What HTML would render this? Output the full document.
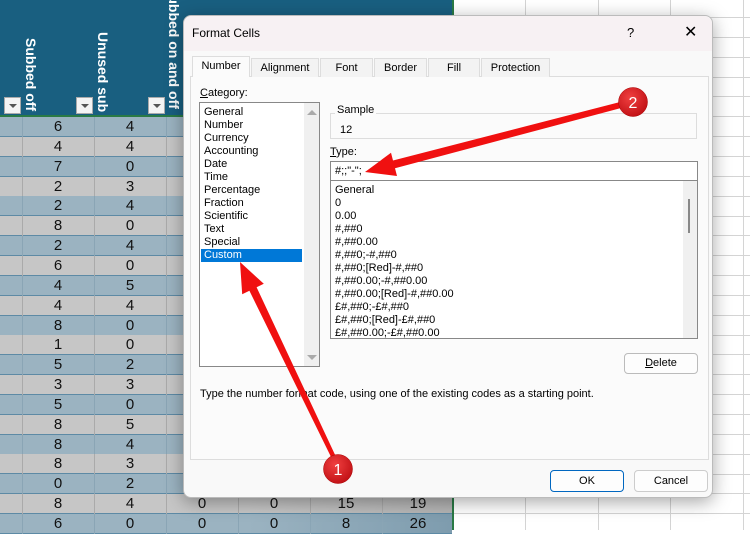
<!DOCTYPE html>
<html><head><style>
*{margin:0;padding:0;box-sizing:border-box}
body{width:750px;height:530px;overflow:hidden;position:relative;background:#fff;font-family:"Liberation Sans",sans-serif}
.abs{position:absolute}
.hdr{left:0;top:0;width:452px;height:115px;background:#195f80}
.vt{position:absolute;color:#fff;font-weight:bold;font-size:14px;writing-mode:vertical-rl;white-space:nowrap}
.fb{position:absolute;top:97px;width:17px;height:17px;background:#f4f4f4;border:1px solid #aaa}
.fb:after{content:"";position:absolute;left:4px;top:6px;border-left:4px solid transparent;border-right:4px solid transparent;border-top:4px solid #555}
.row{position:absolute;left:0;width:452px;height:20px;border-bottom:1px solid #5d8aa5;font-size:15px;color:#111}
.row span{position:absolute;width:72px;text-align:center;top:1px}
.gl{position:absolute;background:#d4d4d4}
.dlg{left:183px;top:15px;width:530px;height:483px;background:#f9f9f9;border:1px solid #bbb;border-radius:8px;box-shadow:0 4px 18px rgba(0,0,0,.35);font-size:11px;color:#000}
.tab{position:absolute;top:42px;height:19px;border:1px solid #ddd;border-bottom:none;background:#f3f3f3;text-align:center;line-height:18px;font-size:11px}
.li{position:absolute;left:4px;font-size:11px;line-height:13px}
</style></head><body>
<div class="abs hdr"></div>
<div class="abs" style="left:0;top:115px;width:452px;height:2px;background:#2a7a45"></div>
<div class="vt" style="left:23px;top:38px">Subbed off</div>
<div class="vt" style="left:95px;top:32px">Unused sub</div>
<div class="vt" style="left:166px;top:-14px">Subbed on and off</div>
<div class="fb" style="left:4px"></div><div class="fb" style="left:76px"></div><div class="fb" style="left:148px"></div>
<!-- right grid -->
<div id="grid"></div>
<div class="abs" style="left:452px;top:0;width:2px;height:530px;background:#2a7a45"></div>
<div id="rows"></div>
<script>
var v=[[6,4],[4,4],[7,0],[2,3],[2,4],[8,0],[2,4],[6,0],[4,5],[4,4],[8,0],[1,0],[5,2],[3,3],[5,0],[8,5],[8,4],[8,3],[0,2],[8,4,0,0,15,19],[6,0,0,0,8,26]];
var h="";
for(var i=0;i<v.length;i++){var t=117+i*19.85;var bg=i%2?"#c6c6c6":"#9bb3c1";
h+='<div class="row" style="top:'+t+'px;background:linear-gradient(90deg,'+bg+' 0,'+bg+' 55%,'+(i%2?"#b4b4b4":"#7e9cae")+' 100%)">';
for(var j=0;j<6;j++){h+='<div style="position:absolute;left:'+(22+j*72)+'px;top:0;width:1px;height:20px;background:'+(i%2?'#aaa':'#8aa5b5')+'"></div>';}
for(var j=0;j<v[i].length;j++){h+='<span style="left:'+(22+j*72)+'px">'+v[i][j]+'</span>';}
h+='</div>';}
document.getElementById("rows").innerHTML=h;
var g="";
for(var x=525;x<750;x+=72.5)g+='<div class="gl" style="left:'+x+'px;top:0;width:1px;height:530px"></div>';
for(var y=17;y<530;y+=19.85)g+='<div class="gl" style="left:454px;top:'+y+'px;width:296px;height:1px"></div>';
document.getElementById("grid").innerHTML=g;
</script>
<div class="abs dlg">
 <div class="abs" style="left:0;top:0;width:528px;height:35px;background:#f7f1f3;border-radius:8px 8px 0 0"></div>
 <div class="abs" style="left:8px;top:10px;font-size:12px">Format Cells</div>
 <div class="abs" style="left:443px;top:9px;font-size:13px">?</div>
 <div class="abs" style="left:500px;top:6px;font-size:16px">✕</div>
 <div class="abs" style="left:6px;top:60px;width:519px;height:384px;background:#fbfbfb;border:1px solid #ddd"></div>
 <div class="tab" style="left:8px;width:58px;background:#fbfbfb;top:40px;height:21px">Number</div>
 <div class="tab" style="left:67px;width:68px">Alignment</div>
 <div class="tab" style="left:136px;width:53px">Font</div>
 <div class="tab" style="left:190px;width:53px">Border</div>
 <div class="tab" style="left:244px;width:52px">Fill</div>
 <div class="tab" style="left:297px;width:69px">Protection</div>
 <div class="abs" style="left:16px;top:71px"><u>C</u>ategory:</div>
 <div class="abs" style="left:15px;top:86px;width:121px;height:265px;background:#fff;border:1px solid #888">
  <div class="li" style="top:3px">General</div><div class="li" style="top:16px">Number</div><div class="li" style="top:29px">Currency</div><div class="li" style="top:42px">Accounting</div><div class="li" style="top:55px">Date</div><div class="li" style="top:68px">Time</div><div class="li" style="top:81px">Percentage</div><div class="li" style="top:94px">Fraction</div><div class="li" style="top:107px">Scientific</div><div class="li" style="top:120px">Text</div><div class="li" style="top:133px">Special</div>
  <div class="li" style="top:146px;left:1px;width:101px;background:#0078d7;color:#fff;padding-left:3px">Custom</div>
  <div class="abs" style="left:104px;top:0;width:15px;height:263px;background:#f0f0f0"></div>
  <div class="abs" style="left:107px;top:7px;border-left:5px solid transparent;border-right:5px solid transparent;border-bottom:5px solid #aaa"></div>
  <div class="abs" style="left:107px;top:252px;border-left:5px solid transparent;border-right:5px solid transparent;border-top:5px solid #aaa"></div>
 </div>
 <div class="abs" style="left:146px;top:97px;width:367px;height:26px;border:1px solid #ddd"></div>
 <div class="abs" style="left:151px;top:88px;background:#fbfbfb;padding:0 2px">Sample</div>
 <div class="abs" style="left:156px;top:108px">12</div>
 <div class="abs" style="left:146px;top:130px"><u>T</u>ype:</div>
 <div class="abs" style="left:146px;top:145px;width:368px;height:20px;background:#fff;border:1px solid #888;padding:3px 4px">#;;"-";</div>
 <div class="abs" style="left:146px;top:164px;width:368px;height:159px;background:#fff;border:1px solid #888">
  <div class="li" style="top:3px">General</div><div class="li" style="top:16px">0</div><div class="li" style="top:29px">0.00</div><div class="li" style="top:42px">#,##0</div><div class="li" style="top:55px">#,##0.00</div><div class="li" style="top:68px">#,##0;-#,##0</div><div class="li" style="top:81px">#,##0;[Red]-#,##0</div><div class="li" style="top:94px">#,##0.00;-#,##0.00</div><div class="li" style="top:107px">#,##0.00;[Red]-#,##0.00</div><div class="li" style="top:120px">£#,##0;-£#,##0</div><div class="li" style="top:133px">£#,##0;[Red]-£#,##0</div><div class="li" style="top:146px">£#,##0.00;-£#,##0.00</div>
  <div class="abs" style="left:352px;top:0;width:14px;height:157px;background:#f0f0f0"></div>
  <div class="abs" style="left:357px;top:18px;width:2px;height:34px;background:#888"></div>
 </div>
 <div class="abs" style="left:440px;top:337px;width:74px;height:21px;border:1px solid #bbb;border-radius:4px;background:#fdfdfd;text-align:center;line-height:19px"><u>D</u>elete</div>
 <div class="abs" style="left:16px;top:372px">Type the number format code, using one of the existing codes as a starting point.</div>
 <div class="abs" style="left:366px;top:454px;width:74px;height:22px;border:1px solid #0067c0;border-radius:4px;background:#fdfdfd;text-align:center;line-height:20px">OK</div>
 <div class="abs" style="left:450px;top:454px;width:74px;height:22px;border:1px solid #ccc;border-radius:4px;background:#fdfdfd;text-align:center;line-height:20px">Cancel</div>
</div>
<svg class="abs" style="left:0;top:0" width="750" height="530">
<defs><radialGradient id="rg" cx="40%" cy="35%" r="70%"><stop offset="0" stop-color="#f04040"/><stop offset="1" stop-color="#c00f14"/></radialGradient></defs>
<polygon fill="#f01010" points="631.7,99 393,160.5 391,152.8 365,172 397,176 395,168.3 632.3,105"/>
<polygon fill="#f01010" points="333,461 249.4,290.7 242.2,294.2 240,262 263.8,283.8 256.6,287.3 337,459"/>
<circle cx="633" cy="102" r="14.5" fill="url(#rg)" stroke="#a00" stroke-width="0.5"/>
<text x="633" y="108" fill="#fff" font-size="16" text-anchor="middle" font-family="Liberation Sans">2</text>
<circle cx="338" cy="469" r="14.5" fill="url(#rg)" stroke="#a00" stroke-width="0.5"/>
<text x="338" y="475" fill="#fff" font-size="16" text-anchor="middle" font-family="Liberation Sans">1</text>
</svg>
</body></html>
